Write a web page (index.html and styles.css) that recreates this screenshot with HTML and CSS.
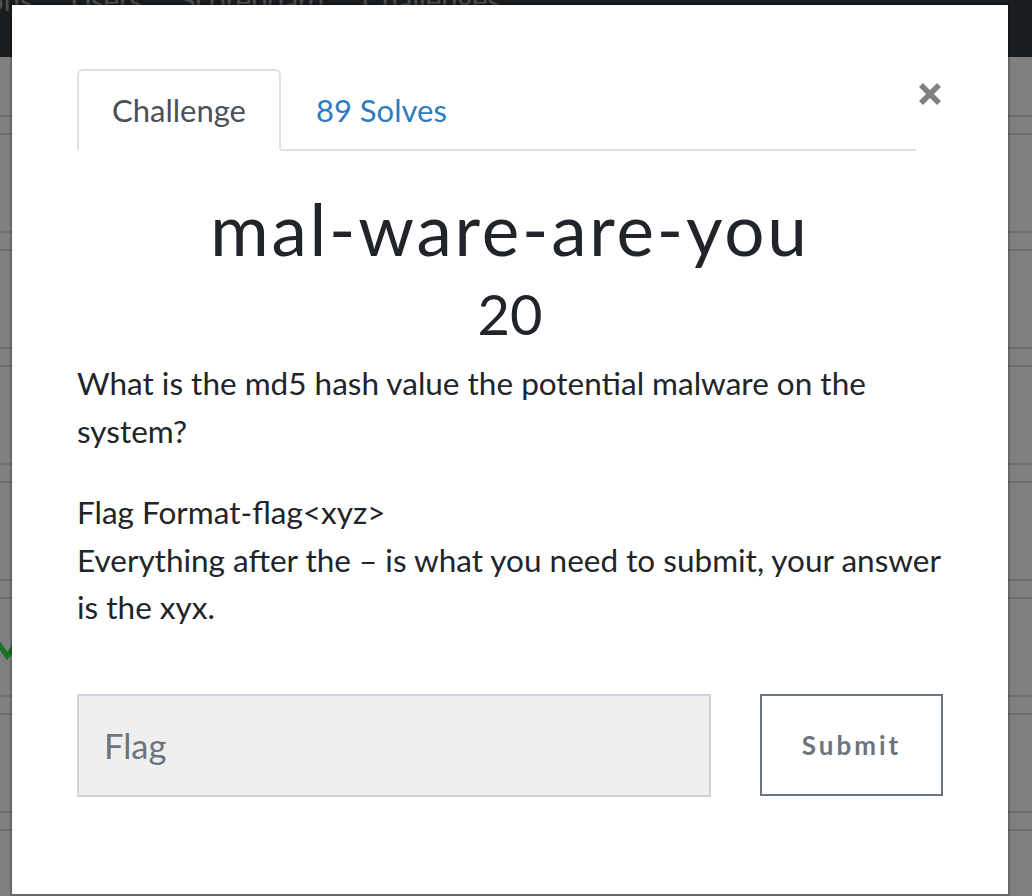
FILE: index.html
```html
<!DOCTYPE html>
<html lang="en">
<head>
    <meta charset="UTF-8">
    <meta name="viewport" content="width=device-width, initial-scale=1.0">
    <title>Challenges</title>
    <link rel="stylesheet" href="styles.css">
</head>
<body>

    <!-- Navbar behind the modal -->
    <div class="navbar">
        <div class="nav-links">
            <a href="#">Notifications</a>
            <a href="#">Users</a>
            <a href="#">Scoreboard</a>
            <a href="#">Challenges</a>
        </div>
    </div>

    <!-- Challenge board behind the modal -->
    <div class="board">
        <div class="board-row"><div class="row-head"></div></div>
        <div class="board-row"><div class="row-head"></div></div>
        <div class="board-row"><div class="row-head"></div></div>
        <div class="board-row"><div class="row-head"></div></div>
        <div class="board-row">
            <div class="row-head"></div>
            <svg class="solved" width="34" height="24" viewBox="0 0 34 24">
                <polyline points="4,4 13,17 32,-8" fill="none" stroke="#2ee84c" stroke-width="5"/>
            </svg>
        </div>
        <div class="board-row"><div class="row-head"></div></div>
        <div class="board-row"><div class="row-head"></div></div>
    </div>

    <div class="backdrop"></div>

    <!-- Challenge modal -->
    <div class="modal">
        <div class="modal-body">
            <div class="tabs-row">
                <ul class="nav-tabs">
                    <li class="active"><a href="#">Challenge</a></li>
                    <li><a href="#">89 Solves</a></li>
                </ul>
                <button type="button" class="close" aria-label="Close">
                    <svg width="22" height="22" viewBox="0 0 22 22">
                        <path d="M2 2 L20 20 M20 2 L2 20" stroke="#808080" stroke-width="5.5" fill="none"/>
                    </svg>
                </button>
            </div>

            <h2 class="challenge-name">mal-ware-are-you</h2>
            <h3 class="challenge-value">20</h3>

            <div class="challenge-desc">
                <p>What is the md5 hash value the potential malware on the system?</p>
                <p>Flag Format-flag&lt;xyz&gt;<br>Everything after the – is what you need to submit, your answer is the xyx.</p>
            </div>

            <form class="submit-row">
                <input type="text" class="flag-input" placeholder="Flag">
                <button type="button" class="submit-btn">Submit</button>
            </form>
        </div>
    </div>

</body>
</html>
```

FILE: styles.css
```css
* {
    box-sizing: border-box;
}

body {
    font-family: Lato, "Open Sans", sans-serif;
    margin: 0;
    padding: 0;
    background-color: #fff;
    color: #212529;
    height: 896px;
    overflow: hidden;
}

/* page behind the modal */
.navbar {
    height: 57px;
    background-color: #343a40;
    overflow: hidden;
}

.nav-links {
    display: flex;
    margin-left: -150px;
    margin-top: -15px;
}

.nav-links a {
    color: rgba(255, 255, 255, 0.5);
    font-size: 29px;
    line-height: 29px;
    text-decoration: none;
    padding: 0 19px;
}

.board {
    margin-top: 58px;
}

.board-row {
    height: 116px;
}

.row-head {
    height: 20px;
    border-top: 2px solid #d9dcdf;
    border-bottom: 2px solid #d9dcdf;
}

.solved {
    display: block;
    margin: 40px 0 0 -6px;
}

.backdrop {
    position: fixed;
    top: 0;
    left: 0;
    right: 0;
    bottom: 0;
    background-color: rgba(0, 0, 0, 0.5);
}

/* modal */
.modal {
    position: fixed;
    top: 3px;
    left: 10px;
    bottom: 0;
    width: 1000px;
    background-color: #fff;
    background-clip: padding-box;
    border: 2px solid rgba(0, 0, 0, 0.2);
}

.modal-body {
    padding: 64px 65px 0;
}

.tabs-row {
    display: flex;
    align-items: flex-start;
}

.nav-tabs {
    flex: 1;
    display: flex;
    list-style: none;
    margin: 0;
    padding: 0;
    border-bottom: 2px solid #dee2e6;
}

.nav-tabs li {
    margin-bottom: -2px;
}

.nav-tabs a {
    display: block;
    padding: 17px 33px;
    font-size: 31px;
    line-height: 44px;
    color: #2f7bbf;
    text-decoration: none;
    border: 2px solid transparent;
    border-radius: 6px 6px 0 0;
}

.nav-tabs li.active a {
    color: #495057;
    background-color: #fff;
    border-color: #dee2e6 #dee2e6 #fff;
}

.close {
    width: 27px;
    padding: 14px 2px 0 3px;
    background: none;
    border: none;
    cursor: pointer;
}

.close svg {
    display: block;
}

.challenge-name {
    margin: 35px 0 0;
    text-align: center;
    font-size: 71px;
    font-weight: 400;
    line-height: 1.2;
    letter-spacing: 2.8px;
}

.challenge-value {
    margin: 9px 0 0;
    text-align: center;
    font-size: 56px;
    font-weight: 400;
    line-height: 1.2;
}

.challenge-desc {
    margin-top: 13px;
    font-size: 31.5px;
    line-height: 47.5px;
}

.challenge-desc p {
    margin: 0 0 34px;
}

.submit-row {
    display: flex;
    gap: 49px;
    margin-top: 62px;
}

.flag-input {
    width: 634px;
    height: 103px;
    padding: 0 25px;
    font-family: Lato, "Open Sans", sans-serif;
    font-size: 34.5px;
    color: #495057;
    background-color: #efefef;
    border: 2px solid #ced4da;
    border-radius: 0;
}

.flag-input::placeholder {
    color: #6c757d;
}

.submit-btn {
    width: 183px;
    height: 102px;
    font-family: Lato, "Open Sans", sans-serif;
    font-size: 26px;
    font-weight: 700;
    letter-spacing: 3px;
    color: #6c757d;
    background-color: #fff;
    border: 2px solid #6c757d;
    border-radius: 0;
    cursor: pointer;
}
```
